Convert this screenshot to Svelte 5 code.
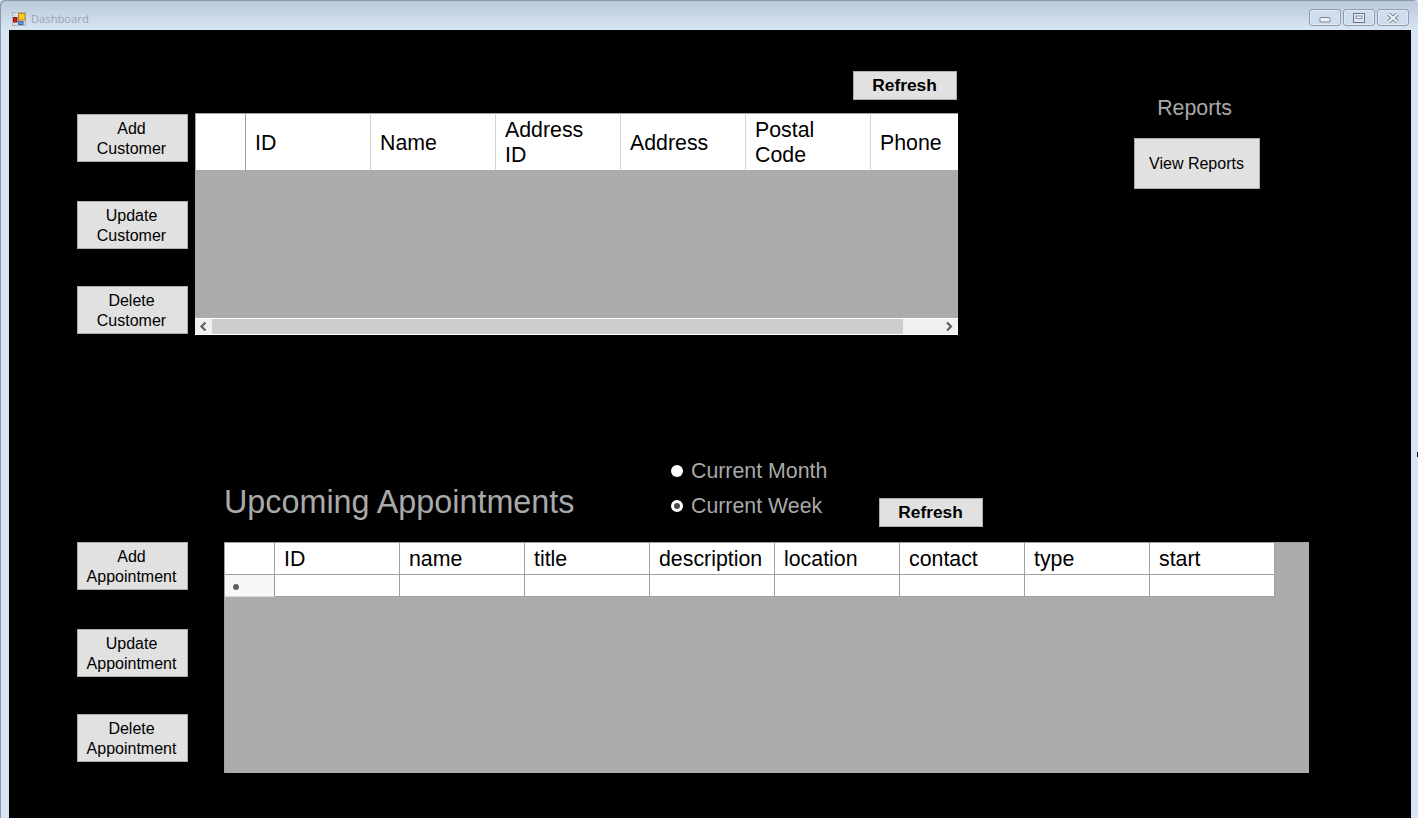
<script>
  const customerColumns = [
    { label: 'ID' },
    { label: 'Name' },
    { label: 'Address ID' },
    { label: 'Address' },
    { label: 'Postal Code' },
    { label: 'Phone' }
  ];
  const appointmentColumns = ['ID', 'name', 'title', 'description', 'location', 'contact', 'type', 'start'];
</script>

<div class="window">
  <header class="titlebar">
    <svg class="app-icon" width="14" height="14" viewBox="0 0 14 14" aria-hidden="true">
      <rect x="0.5" y="0.5" width="13" height="13" fill="#d5d8dc" stroke="#b0b0b0" />
      <path d="M0.5 5 H6 M0.5 9.5 H6 M5 0.5 V13.5" stroke="#eef0f2" stroke-width="0.7" />
      <rect x="6.5" y="1.5" width="6.5" height="6.5" fill="#f6c92e" stroke="#b98a10" />
      <rect x="1.5" y="5.5" width="3.5" height="4.5" fill="#d0201c" stroke="#8c1512" />
      <rect x="6.5" y="9.5" width="4.5" height="3" fill="#5a95e0" stroke="#3c6cb0" />
    </svg>
    <span class="title">Dashboard</span>
    <div class="controls">
      <span class="ctl">
        <svg class="min" width="12" height="6" viewBox="0 0 12 6" aria-hidden="true"><rect x="1" y="0.5" width="10" height="4.5" rx="0.5" fill="#eef1f5" stroke="#7d8794" /></svg>
      </span>
      <span class="ctl">
        <svg width="12" height="10" viewBox="0 0 12 10" aria-hidden="true"><rect x="0.5" y="0.5" width="11" height="9" fill="#dfe6ef" stroke="#6d7784" /><rect x="3" y="3" width="6" height="2.5" fill="#f2f4f7" stroke="#6d7784" stroke-width="0.8" /></svg>
      </span>
      <span class="ctl close">
        <svg width="12" height="10" viewBox="0 0 12 10" aria-hidden="true"><path d="M1.5 1 L10.5 9 M10.5 1 L1.5 9" stroke="#78818d" stroke-width="3.8" /><path d="M1.5 1 L10.5 9 M10.5 1 L1.5 9" stroke="#f2f4f7" stroke-width="2" /></svg>
      </span>
    </div>
  </header>

  <main class="client">
    <section class="top">
      <div class="side side-top">
        <button class="btn">Add<br />Customer</button>
        <button class="btn second">Update<br />Customer</button>
        <button class="btn third">Delete<br />Customer</button>
      </div>

      <div class="customers">
        <button class="btn refresh refresh-top">Refresh</button>
        <div class="grid customer-grid">
          <div class="head-row tall">
            <div class="cell corner"></div>
            {#each customerColumns as col}
              <div class="cell head">{col.label}</div>
            {/each}
          </div>
          <div class="empty"></div>
          <div class="scrollbar">
            <svg class="arrow" width="17" height="15" viewBox="0 0 17 15" aria-hidden="true"><path d="M10.5 3.5 L6.5 7.5 L10.5 11.5" fill="none" stroke="#606060" stroke-width="2.2" /></svg>
            <div class="thumb"></div>
            <svg class="arrow end" width="17" height="15" viewBox="0 0 17 15" aria-hidden="true"><path d="M7 3.5 L11 7.5 L7 11.5" fill="none" stroke="#606060" stroke-width="2.2" /></svg>
          </div>
        </div>
      </div>

      <aside class="reports">
        <h2>Reports</h2>
        <button class="btn view">View Reports</button>
      </aside>
    </section>

    <section class="bottom">
      <div class="side side-bottom">
        <button class="btn">Add<br />Appointment</button>
        <button class="btn second">Update<br />Appointment</button>
        <button class="btn third">Delete<br />Appointment</button>
      </div>

      <div class="appointments">
        <div class="toolbar">
          <h1>Upcoming Appointments</h1>
          <div class="radios">
            <label class="radio"><span class="dot"></span>Current Month</label>
            <label class="radio"><span class="dot on"></span>Current Week</label>
          </div>
          <button class="btn refresh refresh-bottom">Refresh</button>
        </div>
        <div class="grid appointment-grid">
          <div class="head-row short">
            <div class="cell corner"></div>
            {#each appointmentColumns as col}
              <div class="cell head">{col}</div>
            {/each}
          </div>
          <div class="data-row">
            <div class="cell corner new"><span class="star"></span></div>
            {#each appointmentColumns as col}
              <div class="cell"></div>
            {/each}
          </div>
        </div>
      </div>
    </section>
  </main>
  <span class="edge-tick"></span>
</div>

<style>
  :global(body) {
    margin: 0;
    background: #d8e5f3;
    font-family: "Liberation Sans", Arial, sans-serif;
  }

  .window {
    position: relative;
    width: 1418px;
    height: 818px;
    overflow: hidden;
    display: flex;
    flex-direction: column;
    padding: 0 7px 0 9px;
    box-sizing: border-box;
    background: linear-gradient(180deg, #b9c9da 0, #d8e5f3 30px);
    border-radius: 5px 5px 0 0;
    box-shadow: inset 1px 1px 0 #8f9aa6;
  }

  .edge-tick {
    position: absolute;
    right: 0;
    top: 452px;
    width: 1px;
    height: 5px;
    background: #000;
  }

  .titlebar {
    height: 30px;
    flex: none;
    display: flex;
    align-items: center;
  }

  .app-icon {
    margin: 7px 0 0 3px;
  }

  .title {
    margin: 6px 0 0 5px;
    font: 11.2px "Open Sans", sans-serif;
    color: #9aa3ad;
  }

  .controls {
    align-self: flex-start;
    margin: 0 2px 0 auto;
    padding-top: 9px;
    display: flex;
    gap: 2px;
  }

  .ctl {
    width: 30px;
    height: 15px;
    display: flex;
    align-items: center;
    justify-content: center;
    border: 1px solid #8e9db2;
    border-radius: 3px;
    background: #cfdceb;
    box-shadow: inset 0 0 0 1px #dfe8f3;
  }

  .min {
    margin-top: 5px;
  }

  .client {
    flex: 1;
    background: #000;
    min-height: 0;
  }

  .btn {
    display: block;
    padding: 2px 2px 0 0;
    box-sizing: border-box;
    width: 111px;
    height: 48px;
    background: #e1e1e1;
    border: 1px solid #adadad;
    color: #000;
    font: 16px/20px "Liberation Sans", Arial, sans-serif;
    text-align: center;
  }

  .refresh {
    padding: 0 1px 2px 0;
    font-size: 17.33px;
    font-weight: 700;
    height: 29px;
  }

  .top {
    display: flex;
    height: 412px;
  }

  .side {
    margin-left: 68px;
    width: 111px;
    flex: none;
  }

  .side-top {
    padding-top: 84px;
  }

  .side-bottom {
    padding-top: 100px;
  }

  .second {
    margin-top: 39px;
  }

  .third {
    margin-top: 37px;
  }

  .customers {
    margin-left: 7px;
    width: 763px;
    flex: none;
    padding-top: 41px;
  }

  .refresh-top {
    width: 104px;
    margin: 0 1px 13px auto;
  }

  .grid {
    box-sizing: border-box;
    background: #ababab;
  }

  .customer-grid {
    height: 222px;
    display: flex;
    flex-direction: column;
    overflow: hidden;
  }

  .head-row,
  .data-row {
    display: flex;
    flex: none;
  }

  .tall {
    height: 57px;
  }

  .short {
    height: 32px;
  }

  .data-row {
    height: 22px;
  }

  .cell {
    box-sizing: border-box;
    width: 125px;
    flex: none;
    background: #fff;
    border-right: 1px solid #a0a0a0;
    border-bottom: 1px solid #a0a0a0;
    color: #000;
    font-size: 21.33px;
    line-height: 25px;
    padding: 2px 20px 0 9px;
    display: flex;
    align-items: center;
  }

  .cell.corner {
    width: 50px;
  }

  .customer-grid .cell {
    border-top: 1px solid #a0a0a0;
    border-bottom: 0;
    border-right-color: #d4d4d4;
  }

  .customer-grid .cell.corner {
    width: 51px;
    border-left: 1px solid #a0a0a0;
    border-right-color: #a0a0a0;
  }

  .empty {
    flex: 1;
  }

  .scrollbar {
    height: 17px;
    flex: none;
    display: flex;
    align-items: center;
    background: #f0f0f0;
    border-top: 1px solid #fff;
    border-bottom: 1px solid #fff;
    box-sizing: border-box;
  }

  .arrow {
    flex: none;
  }

  .thumb {
    width: 691px;
    height: 15px;
    background: #cdcdcd;
  }

  .arrow.end {
    margin-left: auto;
    margin-right: 1px;
  }

  .reports {
    margin-left: 176px;
    width: 126px;
    flex: none;
    padding-top: 65px;
    text-align: center;
  }

  h2 {
    margin: 0 0 17px -5px;
    font-size: 21.33px;
    font-weight: 400;
    line-height: 26px;
    color: #a9a9a9;
  }

  .view {
    padding: 0 1px 0 0;
    width: 126px;
    height: 51px;
  }

  .bottom {
    display: flex;
  }

  .appointments {
    margin-left: 36px;
    width: 1085px;
    flex: none;
  }

  .toolbar {
    display: flex;
    height: 100px;
  }

  h1 {
    margin: 41px 0 0 0;
    width: 447px;
    flex: none;
    font-size: 32.35px;
    font-weight: 400;
    line-height: 38px;
    color: #a9a9a9;
  }

  .radios {
    width: 208px;
    flex: none;
    margin-top: 17px;
    display: flex;
    flex-direction: column;
    gap: 10px;
  }

  .radio {
    display: flex;
    align-items: center;
    gap: 8px;
    height: 25px;
    font-size: 21.33px;
    color: #a9a9a9;
  }

  .dot {
    width: 12px;
    height: 12px;
    margin-bottom: 2px;
    box-sizing: border-box;
    border-radius: 50%;
    background: #fff;
  }

  .dot.on {
    background: #4a4a4a;
    border: 3px solid #fff;
  }

  .refresh-bottom {
    width: 104px;
    margin-top: 56px;
  }

  .appointment-grid {
    height: 231px;
    border-top: 1px solid #a0a0a0;
    border-left: 1px solid #a0a0a0;
  }

  .new {
    background: #f7f7f7;
    border-bottom-color: #d8d8d8;
  }

  .star {
    width: 6px;
    height: 6px;
    margin: 0 0 0 -1px;
    border-radius: 50%;
    background: #606060;
  }
</style>
